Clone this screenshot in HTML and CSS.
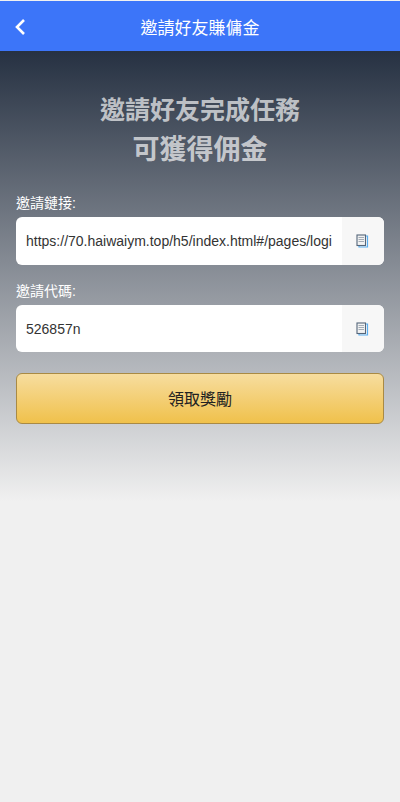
FILE: index.html
```html
<!DOCTYPE html>
<html lang="zh-Hant">
<head>
  <meta charset="UTF-8">
  <title>邀請好友賺傭金</title>
  <link rel="stylesheet" href="styles.css">
</head>
<body>

<div class="header">
  <svg class="back" width="12" height="18" viewBox="0 0 12 18">
    <path d="M10 2 L3 9 L10 16" fill="none" stroke="#fff" stroke-width="2.6"/>
  </svg>
  <div class="header-title">邀請好友賺傭金</div>
</div>

<div class="main">
  <h1 class="title">邀請好友完成任務<br><span class="title-big">可獲得佣金</span></h1>

  <div class="field">
    <label class="field-label">邀請鏈接:</label>
    <div class="field-box">
      <input class="field-input" type="text" value="https://70.haiwaiym.top/h5/index.html#/pages/login/register?code=526857n" readonly>
      <div class="copy">
        <svg width="13" height="14" viewBox="0 0 13 14">
          <path d="M3 2 H11.5 V13 H3 Z" fill="none" stroke="#5aaef0" stroke-width="1.2"/>
          <rect x="1" y="1" width="8.5" height="10.5" fill="#f2f2f2" stroke="#55667a" stroke-width="1.1"/>
          <path d="M2.5 3.5 H8 M2.5 5.5 H8 M2.5 7.5 H8" stroke="#a3acb6" stroke-width="1"/>
        </svg>
      </div>
    </div>
  </div>

  <div class="field">
    <label class="field-label">邀請代碼:</label>
    <div class="field-box code">
      <input class="field-input" type="text" value="526857n" readonly>
      <div class="copy">
        <svg width="13" height="14" viewBox="0 0 13 14">
          <path d="M3 2 H11.5 V13 H3 Z" fill="none" stroke="#5aaef0" stroke-width="1.2"/>
          <rect x="1" y="1" width="8.5" height="10.5" fill="#f2f2f2" stroke="#55667a" stroke-width="1.1"/>
          <path d="M2.5 3.5 H8 M2.5 5.5 H8 M2.5 7.5 H8" stroke="#a3acb6" stroke-width="1"/>
        </svg>
      </div>
    </div>
  </div>

  <button class="claim">領取獎勵</button>
</div>

</body>
</html>
```

FILE: styles.css
```css
* {
  box-sizing: border-box;
}

body {
  margin: 0;
  height: 802px;
  overflow: hidden;
  padding-top: 1px;
  background-color: #f0f0f0;
  font-family: "Liberation Sans", Arial, "Noto Sans CJK TC", sans-serif;
}

.header {
  display: flex;
  align-items: center;
  justify-content: center;
  position: relative;
  height: 50px;
  background-color: #3c75f9;
}

.back {
  position: absolute;
  left: 14px;
  top: 17px;
}

.header-title {
  color: #fff;
  font-size: 17px;
}

.main {
  height: 450px;
  padding: 39px 16px 0;
  background: linear-gradient(#263142, #f0f0f0);
}

.title {
  margin: 0 0 24px;
  color: rgba(255, 255, 255, 0.68);
  font-size: 25px;
  font-weight: bold;
  line-height: 40px;
  text-align: center;
}

.title-big {
  font-size: 27px;
}

.field {
  margin-bottom: 17px;
}

.field-label {
  display: block;
  margin-bottom: 5px;
  color: #fff;
  font-size: 14px;
  line-height: 18px;
}

.field-box {
  display: flex;
  height: 48px;
  background-color: #fff;
  border-radius: 6px;
  overflow: hidden;
}

.field-box.code {
  height: 47px;
}

.field-input {
  flex: 1;
  min-width: 0;
  padding: 0 10px;
  border: none;
  outline: none;
  background: none;
  color: #333;
  font-family: inherit;
  font-size: 14px;
}

.copy {
  display: flex;
  align-items: center;
  justify-content: center;
  width: 42px;
  padding-right: 1px;
  background-color: #f7f7f7;
}

.claim {
  display: block;
  width: 100%;
  height: 51px;
  margin-top: 21px;
  padding-bottom: 3px;
  border: 1px solid #a98a44;
  border-radius: 6px;
  background: linear-gradient(#f7dd9f, #f0c14b);
  color: #222;
  font-family: inherit;
  font-size: 16px;
}
```
